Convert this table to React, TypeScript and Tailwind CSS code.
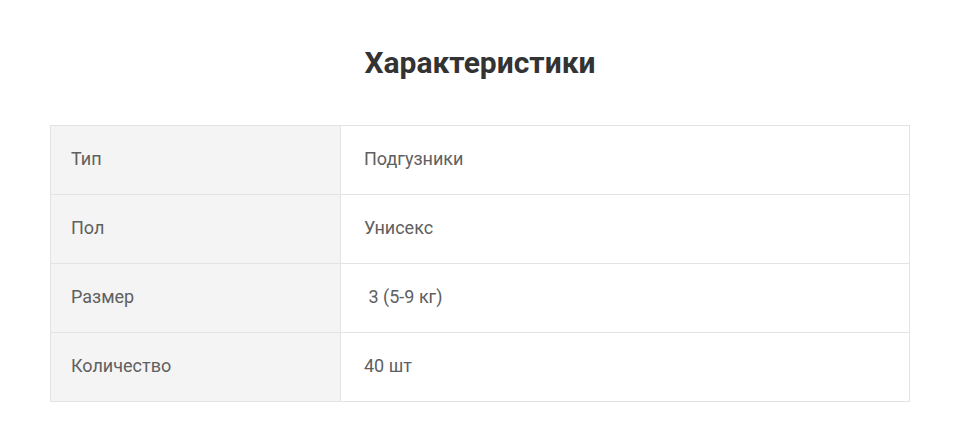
import React from "react";

const rows: [string, string][] = [
  ["Тип", "Подгузники"],
  ["Пол", "Унисекс"],
  ["Размер", " 3 (5-9 кг)"],
  ["Количество", "40 шт"],
];

const App: React.FC = () => {
  return (
    <div className="min-h-screen bg-white px-[50px] pt-[43px]" style={{ fontFamily: "Roboto, 'Noto Sans', sans-serif" }}>
      <h2 className="text-center text-[30px] leading-[40px] font-bold text-[#333333]">Характеристики</h2>

      <table className="mt-[42px] w-full border-collapse border border-[#e3e3e3] text-[18px] text-[#606060]">
        <tbody>
          {rows.map(([name, value]) => (
            <tr key={name} className="h-[69px] border-b border-[#e3e3e3]">
              <td className="w-[290px] bg-[#f4f4f4] pl-[20px] pb-[4px] border-r border-[#e3e3e3]">{name}</td>
              <td className="pl-[23px] pb-[4px] whitespace-pre">{value}</td>
            </tr>
          ))}
        </tbody>
      </table>
    </div>
  );
};

export default App;
